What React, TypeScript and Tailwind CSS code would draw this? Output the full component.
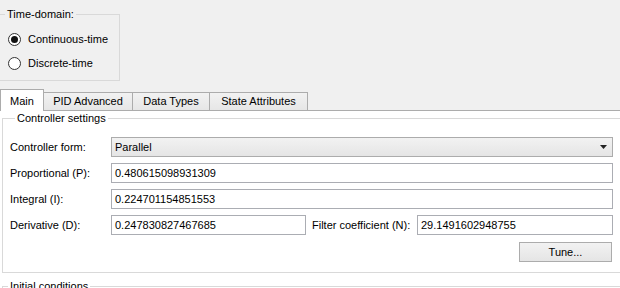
import { ReactNode } from "react";

function Radio({ checked, label }: { checked?: boolean; label: string }) {
  return (
    <div className="flex items-center h-[24px] ml-[8px] gap-[7px]">
      <div className="w-[13px] h-[13px] rounded-full border border-[#333] bg-white flex items-center justify-center">
        {checked && <div className="w-[7px] h-[7px] rounded-full bg-[#111]" />}
      </div>
      <span>{label}</span>
    </div>
  );
}

function Field({ value, width }: { value: string; width: string }) {
  return (
    <div className={`${width} h-[20px] border border-[#abadb3] bg-white flex items-center pl-[3px]`}>
      {value}
    </div>
  );
}

function Row({ label, children }: { label: string; children: ReactNode }) {
  return (
    <div className="flex items-center h-[20px]">
      <div className="w-[101px]">{label}</div>
      {children}
    </div>
  );
}

const tabs = [
  { name: "PID Advanced", w: "w-[89px]" },
  { name: "Data Types", w: "w-[77px]" },
  { name: "State Attributes", w: "w-[98px]" },
];

export default function App() {
  return (
    <div
      className="w-[620px] h-[288px] overflow-hidden bg-[#f0f0f0] text-[11px] text-black flex flex-col"
      style={{ fontFamily: '"Liberation Sans", Arial, sans-serif' }}
    >
      {/* Time-domain group */}
      <fieldset className="mt-[8px] ml-[-1px] w-[121px] border border-[#d9d9d9] pt-[6px] pb-[5px]">
        <legend className="ml-[5px] px-[2px] leading-[13px]">Time-domain:</legend>
        <Radio checked label="Continuous-time" />
        <Radio label="Discrete-time" />
      </fieldset>

      {/* Tab bar */}
      <div className="mt-[8px] flex items-end h-[22px]">
        <div className="w-[44px] h-[22px] bg-white border-l border-t border-r border-[#acacac] flex items-center justify-center pt-[1px]">
          Main
        </div>
        {tabs.map((t) => (
          <div
            key={t.name}
            className={`${t.w} h-[19px] border-t border-r border-b border-[#acacac] bg-linear-to-b from-[#f2f2f2] to-[#e6e6e6] flex items-center justify-center`}
          >
            {t.name}
          </div>
        ))}
        <div className="flex-1 border-b border-[#acacac]" />
      </div>

      {/* Panel */}
      <div className="flex-1 bg-white w-[640px]">
        <fieldset className="mt-[1px] ml-[2px] w-[640px] border border-[#d9d9d9] pl-[7px] pt-[12px] pb-[10px] flex flex-col gap-[6px]">
          <legend className="ml-[5px] px-[2px] leading-[13px]">Controller settings</legend>
          <Row label="Controller form:">
            <div className="w-[502px] h-[20px] border border-[#acacac] bg-linear-to-b from-[#f2f2f2] to-[#e5e5e5] flex items-center pl-[3px] pr-[5px]">
              <span className="flex-1">Parallel</span>
              <svg width="7" height="4" viewBox="0 0 7 4">
                <polygon points="0,0 7,0 3.5,4" fill="#222" />
              </svg>
            </div>
          </Row>
          <Row label="Proportional (P):">
            <Field value="0.480615098931309" width="w-[502px]" />
          </Row>
          <Row label="Integral (I):">
            <Field value="0.224701154851553" width="w-[502px]" />
          </Row>
          <Row label="Derivative (D):">
            <Field value="0.247830827467685" width="w-[195px]" />
            <div className="ml-[6px] w-[105px]">Filter coefficient (N):</div>
            <Field value="29.1491602948755" width="w-[196px]" />
          </Row>
          <div className="flex mt-[1px]">
            <button className="ml-[509px] w-[93px] h-[20px] border border-[#acacac] bg-linear-to-b from-[#f2f2f2] to-[#e5e5e5] flex items-center justify-center">
              Tune...
            </button>
          </div>
        </fieldset>
        <fieldset className="mt-[7px] ml-[2px] w-[640px] h-[40px] border border-[#d9d9d9]">
          <legend className="ml-[5px] px-[2px] leading-[13px]">Initial conditions</legend>
        </fieldset>
      </div>
    </div>
  );
}
